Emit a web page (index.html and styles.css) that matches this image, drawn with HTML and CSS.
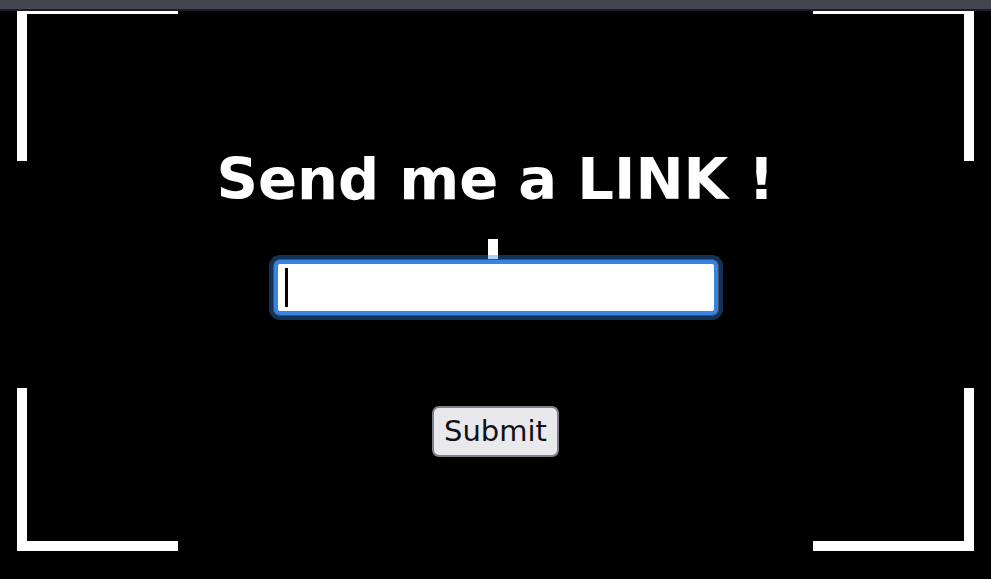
FILE: index.html
```html
<!DOCTYPE html>
<html lang="en">
<head>
<meta charset="utf-8">
<title>Send me a LINK !</title>
<link rel="stylesheet" href="styles.css">
</head>
<body>
<div class="topbar"></div>
<div class="corner corner-tl"></div>
<div class="corner corner-tr"></div>
<div class="corner corner-bl"></div>
<div class="corner corner-br"></div>
<main class="stage">
  <h1 class="title">Send me a LINK !</h1>
  <div class="tick"></div>
  <form class="form" onsubmit="return false">
    <div class="field">
      <input class="link-input" type="text" aria-label="Link">
      <span class="caret"></span>
    </div>
    <button class="submit" type="submit">Submit</button>
  </form>
</main>
</body>
</html>
```
FILE: styles.css
```css
html, body {
  margin: 0;
  padding: 0;
}
body {
  background: #000;
  width: 991px;
  height: 579px;
  overflow: hidden;
  position: relative;
  font-family: "DejaVu Sans", "Liberation Sans", sans-serif;
}
.topbar {
  position: relative;
  z-index: 5;
  height: 9px;
  background: #43464e;
  border-bottom: 2px solid #1c1e23;
}
.corner {
  position: absolute;
  width: 161px;
  box-sizing: border-box;
  border: 0 solid #fff;
}
.corner-tl {
  top: 4px;
  left: 17px;
  height: 157px;
  border-top-width: 10px;
  border-left-width: 10px;
}
.corner-tr {
  top: 4px;
  right: 17px;
  height: 157px;
  border-top-width: 10px;
  border-right-width: 10px;
}
.corner-bl {
  bottom: 28px;
  left: 17px;
  height: 163px;
  border-bottom-width: 10px;
  border-left-width: 10px;
}
.corner-br {
  bottom: 28px;
  right: 17px;
  height: 163px;
  border-bottom-width: 10px;
  border-right-width: 10px;
}
.stage {
  display: flex;
  flex-direction: column;
  align-items: center;
}
.title {
  margin: 135px 0 0;
  color: #fff;
  font-size: 57.6px;
  line-height: 67px;
  font-weight: bold;
  white-space: nowrap;
}
.tick {
  margin-top: 26px;
  width: 10px;
  height: 21px;
  background: #fff;
  margin-left: -5px;
}
.form {
  display: flex;
  flex-direction: column;
  align-items: center;
}
.field {
  position: relative;
}
.link-input {
  display: block;
  box-sizing: border-box;
  width: 444px;
  height: 55px;
  margin: 0;
  padding: 0 8px;
  background: #fff;
  border: 4px solid #3584e4;
  border-radius: 6px;
  box-shadow: 0 0 0 1px #4b4f57, 0 0 0 5px rgba(53, 132, 228, 0.38);
  outline: none;
  font-family: "DejaVu Sans", sans-serif;
  font-size: 20px;
}
.caret {
  position: absolute;
  left: 11px;
  top: 8px;
  width: 3px;
  height: 39px;
  background: #000;
}
.submit {
  margin-top: 91px;
  box-sizing: border-box;
  width: 127px;
  height: 51px;
  padding: 0;
  background: #e9e8ed;
  border: 2px solid #807f8b;
  border-radius: 7px;
  color: #111;
  font-family: "DejaVu Sans", sans-serif;
  font-size: 29px;
  line-height: 1;
}
```
